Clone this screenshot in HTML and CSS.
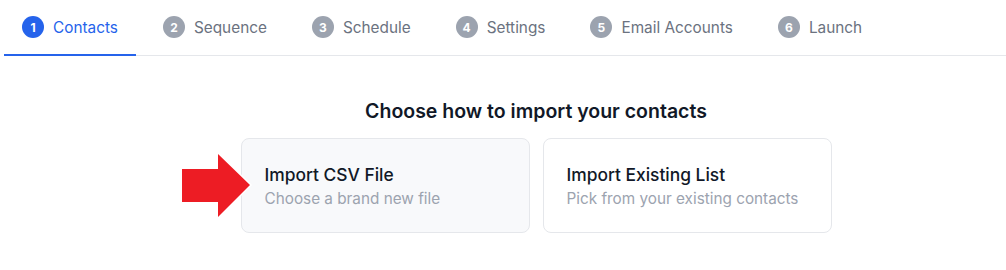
FILE: index.html
```html
<!DOCTYPE html>
<html lang="en">
  <head>
    <meta charset="UTF-8" />
    <meta name="viewport" content="width=device-width, initial-scale=1.0" />
    <title>New Campaign - Contacts</title>
    <link rel="stylesheet" href="styles.css">
  </head>
  <body>
    <nav class="steps">
      <div class="step active"><span class="badge">1</span>Contacts</div>
      <div class="step"><span class="badge">2</span>Sequence</div>
      <div class="step"><span class="badge">3</span>Schedule</div>
      <div class="step"><span class="badge">4</span>Settings</div>
      <div class="step"><span class="badge">5</span>Email Accounts</div>
      <div class="step"><span class="badge">6</span>Launch</div>
    </nav>

    <main class="import">
      <h2 class="import-title">Choose how to import your contacts</h2>
      <div class="options">
        <svg class="pointer" width="76" height="72" viewBox="0 0 76 72">
          <polygon points="4,19 40,19 40,4 72,35 40,67 40,52 4,52" fill="#ed1c24" stroke="#ffffff" stroke-width="3" stroke-linejoin="miter" paint-order="stroke" />
        </svg>
        <div class="option selected">
          <div class="option-name">Import CSV File</div>
          <div class="option-desc">Choose a brand new file</div>
        </div>
        <div class="option">
          <div class="option-name">Import Existing List</div>
          <div class="option-desc">Pick from your existing contacts</div>
        </div>
      </div>
    </main>
  </body>
</html>
```

FILE: styles.css
```css
body {
  margin: 0;
  background-color: #ffffff;
  font-family: Inter, "Noto Sans", sans-serif;
  color: #111827;
}

.steps {
  display: flex;
  gap: 9px;
  margin-left: 4px;
  border-bottom: 1px solid #e5e7eb;
}

.step {
  display: flex;
  align-items: center;
  gap: 9px;
  height: 54px;
  padding: 0 18px;
  border-bottom: 2px solid transparent;
  margin-bottom: -1px;
  font-size: 15.35px;
  color: #6b7280;
}

.step.active {
  color: #2563eb;
  border-bottom-color: #2563eb;
}

.badge {
  display: flex;
  align-items: center;
  justify-content: center;
  width: 22px;
  height: 22px;
  border-radius: 50%;
  background-color: #9ca3af;
  color: #ffffff;
  font-size: 12px;
  font-weight: 700;
}

.step.active .badge {
  background-color: #2563eb;
}

.import {
  display: flex;
  flex-direction: column;
  align-items: center;
  padding: 41px 0 0 66px;
}

.import-title {
  margin: 0 0 13px;
  font-size: 19.5px;
  line-height: 28px;
  font-weight: 600;
  color: #111827;
}

.options {
  position: relative;
  display: flex;
  gap: 13px;
}

.pointer {
  position: absolute;
  left: -63px;
  top: 12px;
  z-index: 1;
}

.option {
  width: 241px;
  padding: 23px 23px 22px;
  border: 1px solid #e5e7eb;
  border-radius: 8px;
  background-color: #ffffff;
}

.option.selected {
  background-color: #f8f9fb;
}

.option-name {
  font-size: 17.4px;
  line-height: 25px;
  font-weight: 500;
  color: #111827;
}

.option-desc {
  margin-top: 1px;
  font-size: 15.3px;
  line-height: 22px;
  color: #9ca3af;
}
```
